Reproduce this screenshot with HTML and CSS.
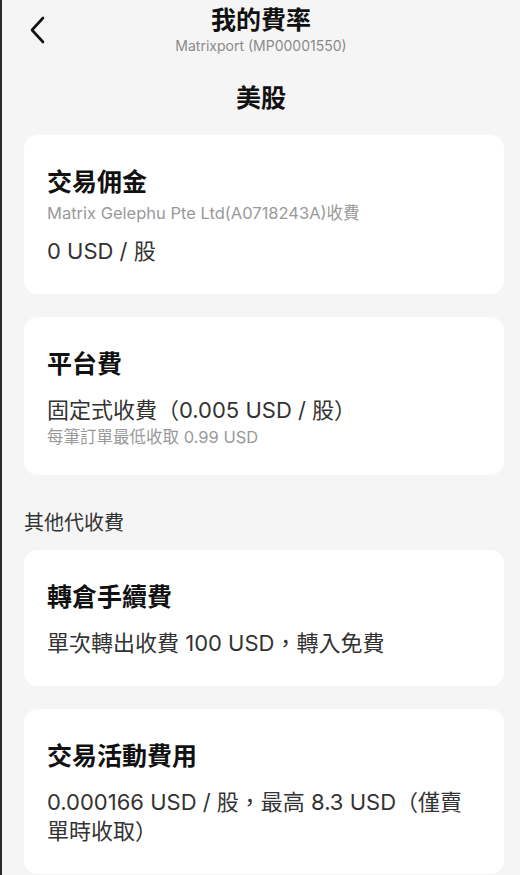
FILE: index.html
```html
<!DOCTYPE html>
<html lang="zh-Hant">
<head>
<meta charset="utf-8">
<link rel="stylesheet" href="styles.css">
</head>
<body>
<div class="page">
  <header class="nav">
    <svg class="back" width="16" height="28" viewBox="0 0 16 28"><polyline points="13,2 2,14 13,26" fill="none" stroke="#111" stroke-width="2.6" stroke-linecap="round" stroke-linejoin="round"/></svg>
    <div class="nav-title">我的費率</div>
    <div class="nav-sub">Matrixport (MP00001550)</div>
  </header>
  <h1 class="market">美股</h1>
  <main class="list">
    <section class="card">
      <div class="card-title">交易佣金</div>
      <div class="card-note first">Matrix Gelephu Pte Ltd(A0718243A)收費</div>
      <div class="card-value v1">0 USD / 股</div>
    </section>
    <section class="card">
      <div class="card-title">平台費</div>
      <div class="card-value">固定式收費（0.005 USD / 股）</div>
      <div class="card-note">每筆訂單最低收取 0.99 USD</div>
    </section>
    <div class="section-label">其他代收費</div>
    <section class="card">
      <div class="card-title">轉倉手續費</div>
      <div class="card-value">單次轉出收費 100 USD，轉入免費</div>
    </section>
    <section class="card last">
      <div class="card-title">交易活動費用</div>
      <div class="card-value">0.000166 USD / 股，最高 8.3 USD（僅賣單時收取）</div>
    </section>
  </main>
</div>
</body>
</html>
```
FILE: styles.css
```css
html, body {
  margin: 0;
  padding: 0;
  background: #f5f5f5;
}
body {
  font-family: Inter, "Noto Sans CJK TC", sans-serif;
  color: #111;
}
.page {
  border-left: 2px solid #2b2b2b;
  min-height: 875px;
  box-sizing: border-box;
  padding: 0 16px 0 22px;
}
.nav {
  position: relative;
  height: 64px;
  text-align: center;
}
.back {
  position: absolute;
  left: 6px;
  top: 16px;
}
.nav-title {
  padding-top: 4px;
  font-size: 25px;
  line-height: 32px;
  font-weight: 700;
  color: #111;
  margin-left: -22px;
  margin-right: -16px;
}
.nav-sub {
  font-size: 14px;
  line-height: 20px;
  color: #8a8a8a;
  margin-left: -22px;
  margin-right: -16px;
}
.market {
  margin: 18px -16px 0 -22px;
  text-align: center;
  font-size: 25px;
  line-height: 32px;
  font-weight: 700;
  color: #111;
}
.list {
  margin-top: 21px;
  display: flex;
  flex-direction: column;
  gap: 23px;
}
.card {
  background: #fff;
  border-radius: 14px;
  padding: 32px 23px 28px;
}
.card-title {
  font-size: 25px;
  line-height: 30px;
  font-weight: 700;
  color: #111;
}
.card-note {
  font-size: 16.5px;
  line-height: 20px;
  color: #999;
  margin-top: 2px;
}
.card-note.first {
  margin-top: 6px;
}
.card-value {
  font-size: 22px;
  line-height: 29px;
  color: #333;
  margin-top: 17px;
}
.card-value.v1 {
  margin-top: 14px;
}
.section-label {
  font-size: 20px;
  line-height: 24px;
  color: #333;
  margin: 13px 0 -8px;
}
```
